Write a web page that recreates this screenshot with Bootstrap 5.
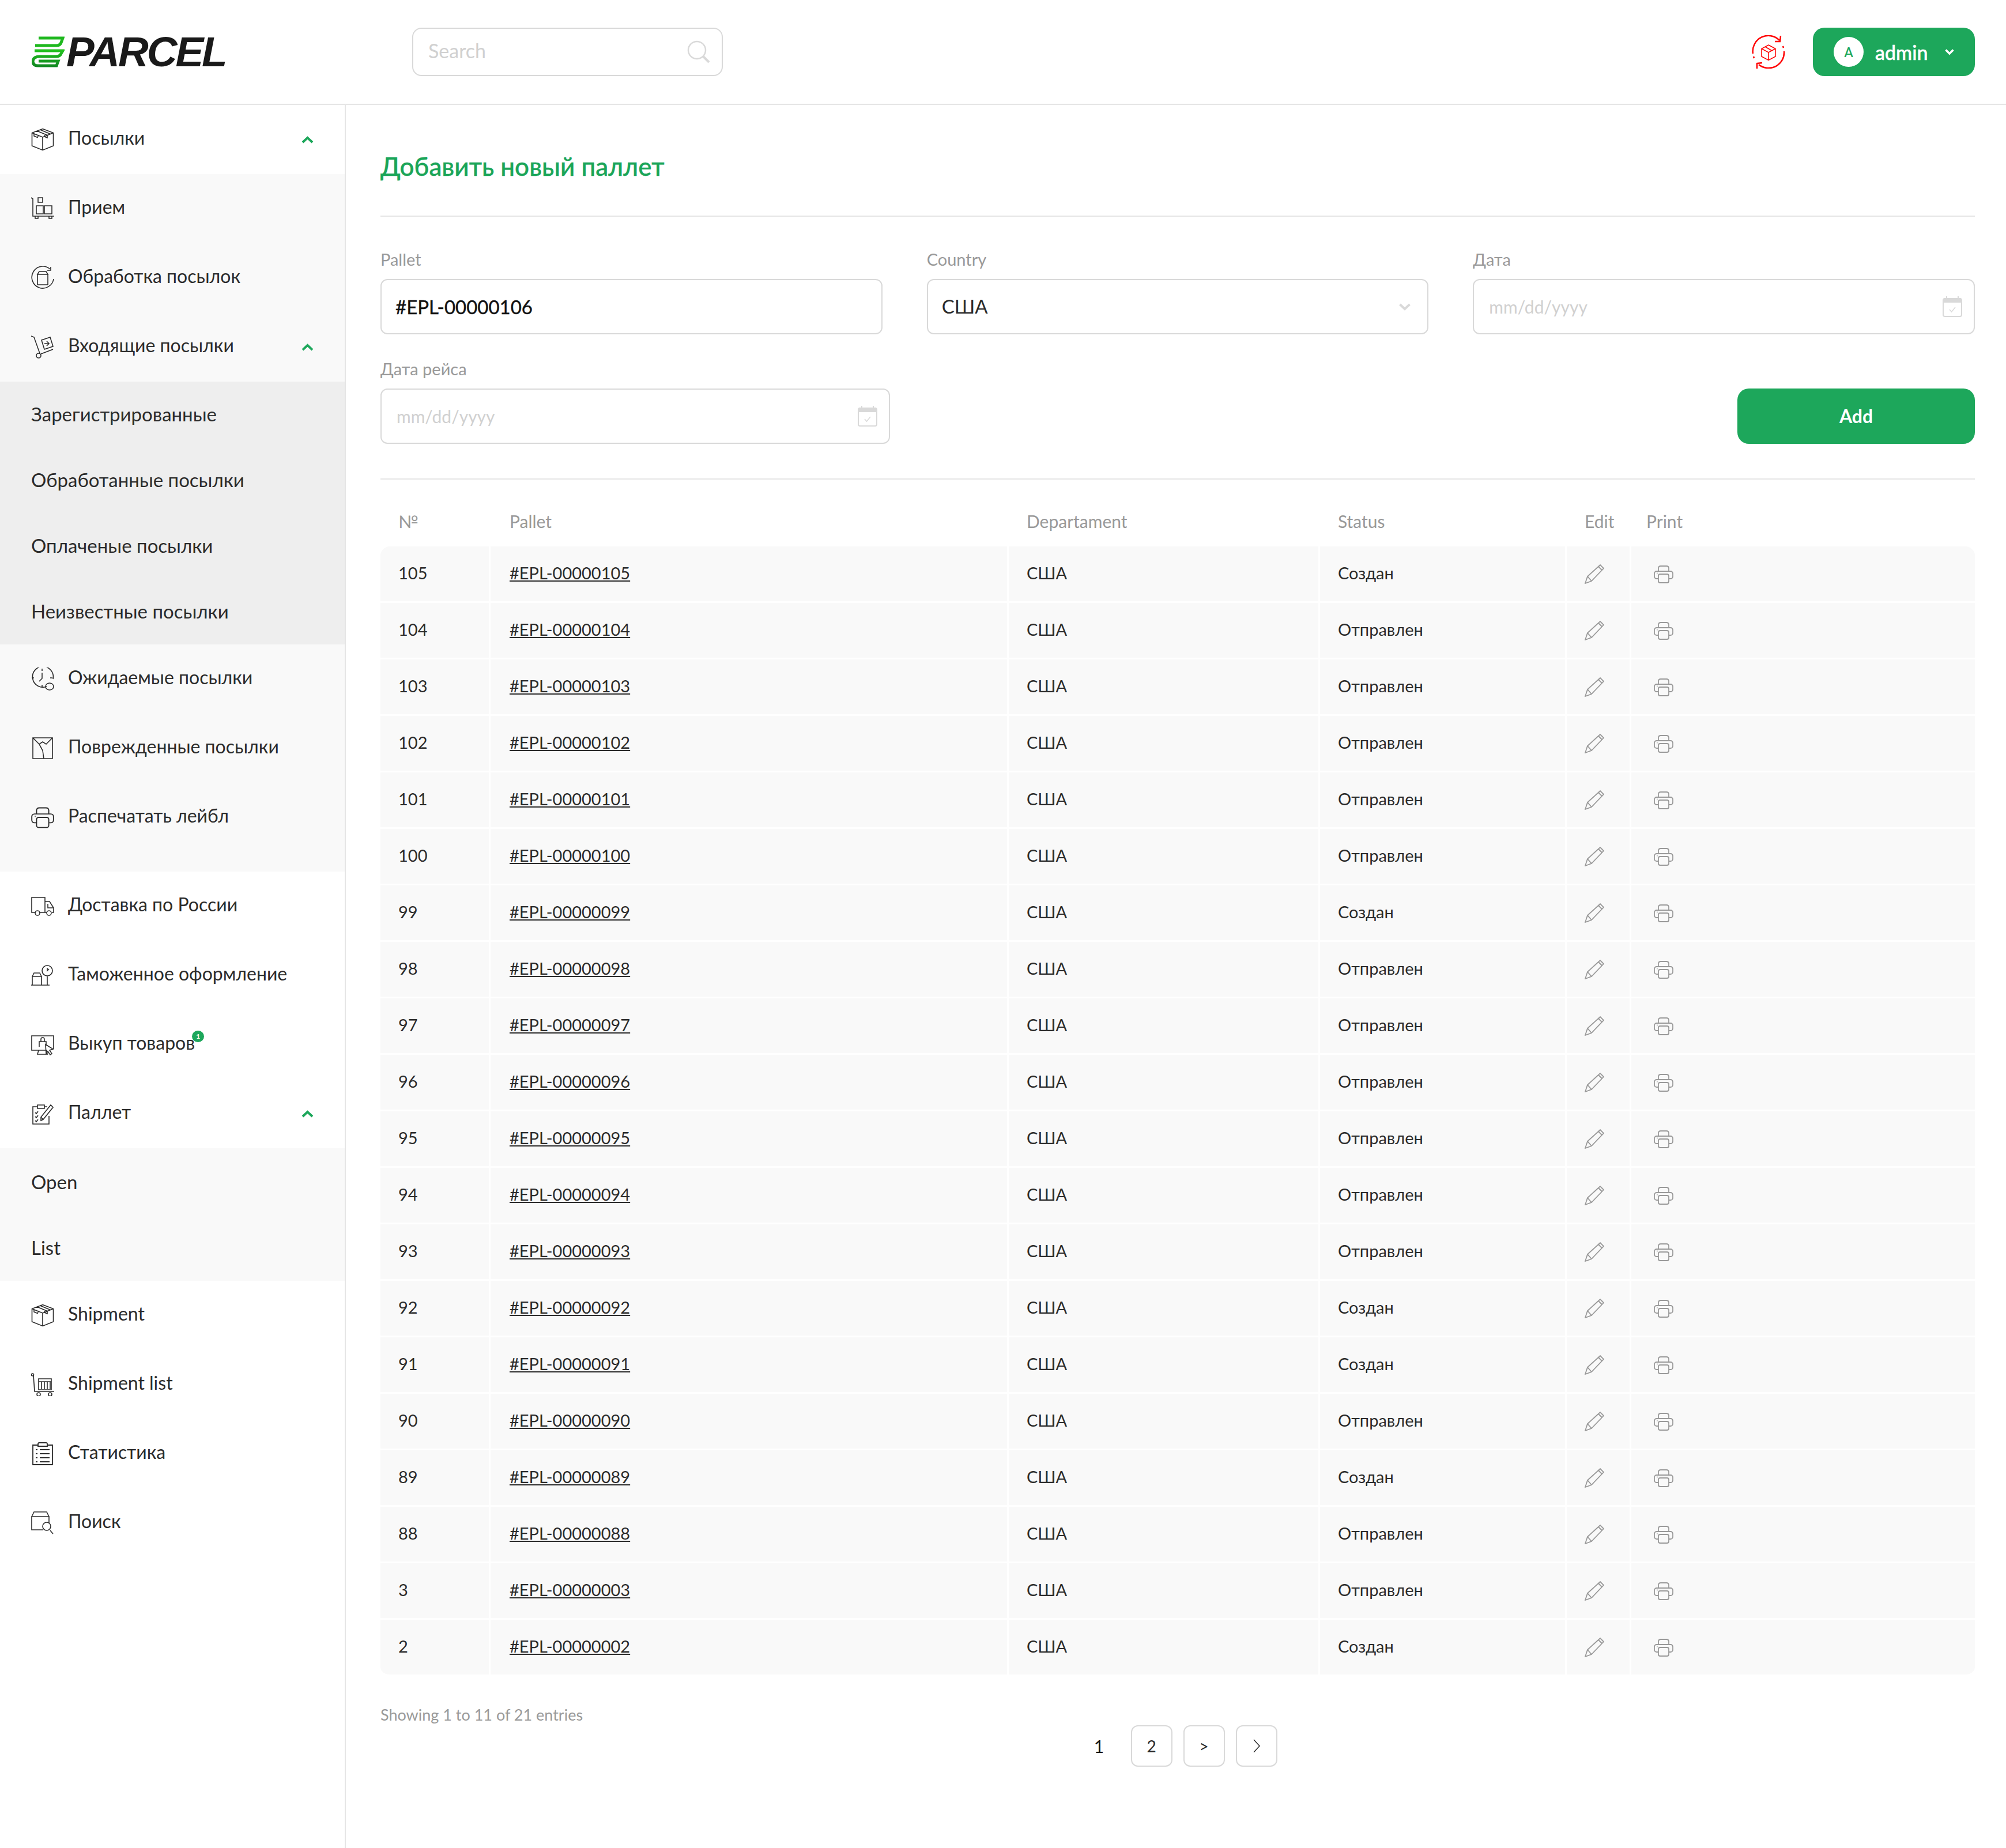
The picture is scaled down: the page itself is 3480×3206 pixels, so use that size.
<!DOCTYPE html>
<html lang="en">
<head>
    <meta charset="UTF-8">
    <meta name="viewport" content="width=device-width, initial-scale=1.0">
    <title>Parcel</title>
    <link href="https://cdn.jsdelivr.net/npm/bootstrap@5.3.0/dist/css/bootstrap.min.css" rel="stylesheet">
    <style>
        body { font-family: "Lato", "Noto Sans", sans-serif; color: #2b2b2b; background: #fff; }
        .top-bar { height: 182px; border-bottom: 2px solid #e5e5e5; padding: 48px 54px 48px 55px; }
        .brand-box { width: 660px; }
        .brand-text { font-family: "Liberation Sans", sans-serif; font-weight: 700; font-style: italic; font-size: 73px; line-height: 56px; letter-spacing: -3px; color: #1a1a1a; margin-left: 3px; }
        .search-box { width: 539px; height: 84px; border: 2px solid #d9d9d9; border-radius: 16px; padding: 0 20px 0 26px; }
        .search-box input { border: 0; outline: 0; font-size: 34px; line-height: 40px; padding: 0 0 4px; width: 100%; color: #2b2b2b; }
        .search-box input::placeholder, .date-box input::placeholder { color: #d0d0d0; }
        .user-btn { width: 281px; height: 84px; background: #1da75b; color: #fff; border: 0; border-radius: 20px; font-size: 34px; font-weight: 500; -webkit-text-stroke: .5px #fff; padding: 0 36px; }
        .user-btn:hover, .user-btn:active, .user-btn.show { background: #1da75b !important; color: #fff !important; }
        .user-btn::after { display: none; }
        .user-avatar { width: 52px; height: 52px; border-radius: 50%; background: #fff; color: #1da75b; font-size: 22px; font-weight: 600; -webkit-text-stroke: 0; }
        .body-wrap { min-height: calc(100vh - 182px); }
        .side-menu { width: 600px; flex: 0 0 600px; border-right: 2px solid #e5e5e5; }
        .side-item { height: 120px; padding: 0 54px 6px 54px; color: #2b2b2b; font-size: 32px; text-decoration: none; }
        .side-ico { width: 40px; height: 40px; margin: 6px 24px 0 0; flex: 0 0 40px; fill: none; stroke: #2b2b2b; stroke-width: 1.6; }
        .side-chev { width: 21px; height: 13px; margin: 6px 0 0 auto; fill: none; stroke: #1da75b; stroke-width: 4; }
        .side-group { background: #f9f9f9; }
        .side-sub { background: #eeeeee; }
        .side-sub-plain { background: #f9f9f9; padding-top: 2px; }
        .sub-item { height: 114px; padding-left: 54px; color: #2b2b2b; font-size: 33px; text-decoration: none; }
        .pad-bottom { padding-bottom: 34px; }
        .side-link { color: inherit; text-decoration: none; }
        .count-pill { position: absolute; top: 3px; right: -16px; width: 21px; height: 20px; padding: 0; background: #1da75b; font-size: 12px; line-height: 20px; font-weight: 700; }
        .main-area { padding: 0 54px 0 60px; min-width: 0; }
        .page-title { font-size: 44px; line-height: 50px; color: #1aa558; font-weight: 500; -webkit-text-stroke: .4px #1aa558; margin: 81px 0 61px; }
        .line-sep { height: 2px; background: #e5e5e5; }
        .form-rows { --bs-gutter-x: 77px; margin-top: 57px; }
        .field-label { font-size: 29px; line-height: 34px; color: #999; margin-bottom: 17px; }
        .main-area .form-control, .main-area .form-select { height: 96px; border: 2px solid #d9d9d9; border-radius: 12px; font-size: 33px; padding: 0 24px; color: #111; box-shadow: none; }
        .main-area .form-control { -webkit-text-stroke: .4px #111; }
        .main-area .form-select { color: #2b2b2b; background-size: 20px 13px; background-position: right 29px center; background-image: url("data:image/svg+xml,%3csvg xmlns='http://www.w3.org/2000/svg' viewBox='0 0 20 13'%3e%3cpath fill='none' stroke='%23d9d9d9' stroke-width='4' d='M1.500 2 10 10 18.500 2'/%3e%3c/svg%3e"); }
        .date-box { height: 96px; border: 2px solid #d9d9d9; border-radius: 12px; padding: 0 20px 0 24px; }
        .date-box input { border: 0; outline: 0; width: 100%; font-size: 30px; }
        .date-wide { width: 884px; }
        .cal-ico { width: 34px; height: 36px; flex: 0 0 34px; }
        .add-btn { width: 412px; height: 96px; background: #1da75b; border: 0; border-radius: 20px; color: #fff; font-size: 32px; font-weight: 700; }
        .second-row { margin-top: 43px; margin-bottom: 60px; }
        .pallet-table { table-layout: fixed; border-collapse: separate; border-spacing: 0; margin: 0; }
        .pallet-table th { font-size: 30px; font-weight: 400; color: #999; padding: 0 0 21px 31px; height: 116px; vertical-align: bottom; border: 0; }
        .pallet-table td { height: 98px; padding: 0 0 3px 31px; font-size: 29px; color: #2b2b2b; background: #f9f9f9; border: 0; border-right: 3px solid #fff; border-bottom: 3px solid #fff; vertical-align: middle; }
        .pallet-table td:last-child { border-right: 0; }
        .pallet-table tr:first-child td:first-child { border-top-left-radius: 16px; }
        .pallet-table tr:first-child td:last-child { border-top-right-radius: 16px; }
        .pallet-table tr:last-child td:first-child { border-bottom-left-radius: 16px; }
        .pallet-table tr:last-child td:last-child { border-bottom-right-radius: 16px; }
        .pallet-table a { color: #2b2b2b; }
        .pallet-table .print-col { padding-left: 26px; }
        .pallet-table .code-col { padding-left: 33px; }
        .th-num { width: 191px; }
        .th-code { width: 899px; }
        .th-dep { width: 540px; }
        .th-status { width: 428px; }
        .th-edit { width: 112px; }
        .tbl-ico { width: 34px; height: 34px; margin-top: 4px; fill: none; stroke: #999; stroke-width: 1.8; display: block; }
        .print-ico { margin-left: 13px; }
        .table-info { font-size: 27px; line-height: 34px; color: #999; margin-top: 50px; }
        .pager { gap: 20px; margin-top: 1px; }
        .pager .page-link { width: 72px; height: 72px; display: flex; align-items: center; justify-content: center; padding: 0; border: 2px solid #d9d9d9 !important; border-radius: 12px !important; font-size: 28px; color: #2b2b2b; background: #fff; }
        .pager .page-item.active .page-link { border-color: transparent !important; color: #111; background: #fff; font-size: 30px; }
    </style>
</head>
<body>

<!-- icons used more than once -->
<svg width="0" height="0" class="d-none">
    <symbol id="i-box" viewBox="0 0 40 40">
        <path d="M20 1.500 38.500 8.500V31L20 38.500 1.500 31V8.500ZM1.500 8.500 20 16 38.500 8.500M20 16V38.500M10 5 28 12.500V17L23 15V12.500M15.500 3 33.500 10.500M5 10V14L11 16.500 13 12" />
    </symbol>
    <symbol id="i-print" viewBox="0 0 34 34">
        <path d="M8 12V6.500A4 4 0 0 1 12 3H22A4 4 0 0 1 26 6.500V12M8 25H5A4 4 0 0 1 1 21V16A4 4 0 0 1 5 12H29A4 4 0 0 1 33 16V21A4 4 0 0 1 29 25H26M11 17H23A3 3 0 0 1 26 20V29A3 3 0 0 1 23 32H11A3 3 0 0 1 8 29V20A3 3 0 0 1 11 17ZM5.500 15.500H6.500" />
    </symbol>
    <symbol id="i-pen" viewBox="0 0 34 34">
        <path d="M1 33 5 21 27 1 33 7 12 29ZM5 21 12 29M24 4 30 10" />
    </symbol>
    <symbol id="i-cal" viewBox="0 0 34 36">
        <rect x="1" y="4" width="32" height="31" rx="3" fill="#fff" stroke="#d9d9d9" stroke-width="2"/>
        <path d="M1 5A3 3 0 0 1 4 3H30A3 3 0 0 1 33 5V11H1Z" fill="#d9d9d9"/>
        <path d="M7 0V4M27 0V4" stroke="#d9d9d9" stroke-width="2"/>
        <path d="M12 23 15.500 27 22 19" fill="none" stroke="#d9d9d9" stroke-width="1.500"/>
    </symbol>
    <symbol id="i-up" viewBox="0 0 21 13">
        <path d="M2 11 10.500 3 19 11" />
    </symbol>
</svg>

<header class="top-bar d-flex align-items-center">
    <div class="brand-box d-flex align-items-center">
        <svg width="57" height="54" viewBox="0 0 57 54" fill="none" stroke-width="5">
            <defs>
                <linearGradient id="logoGreen" x1="0" y1="0" x2="0" y2="1">
                    <stop offset="0" stop-color="#22c01e"/>
                    <stop offset="1" stop-color="#128a22"/>
                </linearGradient>
            </defs>
            <path d="M12 3H54L51 11Q49 16 43 16H6" stroke="#1fb81f"/>
            <path d="M5 25H54L51 30Q49 35 42 35H14Q3 35 2 43Q2 51 11 51H43L46 43H12" stroke="url(#logoGreen)"/>
        </svg>
        <span class="brand-text">PARCEL</span>
    </div>
    <div class="search-box d-flex align-items-center">
        <input type="text" placeholder="Search">
        <svg width="40" height="40" viewBox="0 0 40 40" fill="none" stroke="#d9d9d9" stroke-width="2.500" class="flex-shrink-0">
            <circle cx="17" cy="17" r="15"/>
            <path d="M28 28 38 38" stroke-width="4"/>
        </svg>
    </div>
    <div class="ms-auto d-flex align-items-center">
        <svg width="58" height="58" viewBox="0 0 58 58" fill="none" stroke="#f00" stroke-width="2.500">
            <path d="M2 32A27 27 0 0 1 48 9M50 1 49 11 40 11M54 19 55 22M56 28A27 27 0 0 1 12 51M9 58 9 49 18 48M4 40 3 37"/>
            <path d="M29 17 41 23.500V37L29 43.500 17 37V23.500ZM17 23.500 29 30 41 23.500M29 30V43.500M23 20 35 27" stroke-width="1.500"/>
        </svg>
        <div class="dropdown ms-5">
            <button class="btn user-btn dropdown-toggle d-flex align-items-center" type="button" data-bs-toggle="dropdown">
                <span class="user-avatar d-flex align-items-center justify-content-center">A</span>
                <span class="ms-3 ps-1">admin</span>
                <svg class="ms-auto" width="16" height="12" viewBox="0 0 16 12" fill="none" stroke="#fff" stroke-width="3.500"><path d="M1.500 2.500 8 9 14.500 2.500"/></svg>
            </button>
            <ul class="dropdown-menu">
                <li><a class="dropdown-item" href="#">Logout</a></li>
            </ul>
        </div>
    </div>
</header>

<div class="d-flex body-wrap">
    <nav class="side-menu">
        <a class="side-item d-flex align-items-center" href="#">
            <svg class="side-ico"><use href="#i-box"/></svg>Посылки
            <svg class="side-chev"><use href="#i-up"/></svg>
        </a>
        <div class="side-group pad-bottom">
            <a class="side-item d-flex align-items-center" href="#">
                <svg class="side-ico" viewBox="0 0 40 40"><path d="M0 1 3 3V33H40M7 33V37H12V33M31 33V37H36V33M9 15H21V29H9ZM23 15H36V29H23ZM12 1H20V9H12Z"/></svg>Прием
            </a>
            <a class="side-item d-flex align-items-center" href="#">
                <svg class="side-ico" viewBox="0 0 40 40"><path d="M39 22A19 19 0 1 1 33 5M34 1V7H28M11 14H29V32H11ZM14 9H26L29 14H11Z"/></svg>Обработка посылок
            </a>
            <a class="side-item d-flex align-items-center" href="#">
                <svg class="side-ico" viewBox="0 0 40 40"><path d="M0 1 5 3 15 31M17 32 38 24M18 8 33 3 38 19 23 24ZM23 14H31M27 10 31 14 27 18"/><circle cx="13" cy="35" r="4"/></svg>Входящие посылки
                <svg class="side-chev"><use href="#i-up"/></svg>
            </a>
            <div class="side-sub">
                <a class="sub-item d-flex align-items-center" href="#">Зарегистрированные</a>
                <a class="sub-item d-flex align-items-center" href="#">Обработанные посылки</a>
                <a class="sub-item d-flex align-items-center" href="#">Оплаченые посылки</a>
                <a class="sub-item d-flex align-items-center" href="#">Неизвестные посылки</a>
            </div>
            <a class="side-item d-flex align-items-center" href="#">
                <svg class="side-ico" viewBox="0 0 40 40"><path d="M27 33A18 18 0 1 1 38 20M19 2V6M19 30V34M1 18H5M33 18H37M19 9V19L14 24"/><ellipse cx="32" cy="33" rx="7" ry="6"/></svg>Ожидаемые посылки
            </a>
            <a class="side-item d-flex align-items-center" href="#">
                <svg class="side-ico" viewBox="0 0 40 40"><path d="M3 2H37V38H3ZM3 2 14 13 20 9 26 13 37 2M14 13 20 24 22 38"/></svg>Поврежденные посылки
            </a>
            <a class="side-item d-flex align-items-center" href="#">
                <svg class="side-ico" viewBox="0 0 34 34" stroke-width="2"><use href="#i-print"/></svg>Распечатать лейбл
            </a>
        </div>
        <a class="side-item d-flex align-items-center" href="#">
            <svg class="side-ico" viewBox="0 0 40 40"><path d="M8 31H1V5H24V31H14M24 31H27M24 12H32L39 23V31H36M29 16V23H38"/><circle cx="11" cy="32" r="4"/><circle cx="31" cy="32" r="4"/></svg>Доставка по России
        </a>
        <a class="side-item d-flex align-items-center" href="#">
            <svg class="side-ico" viewBox="0 0 40 40"><path d="M0 37H32M2 37V22H18V37M2 22 5 16H15L18 22M28 37V22"/><circle cx="28" cy="12" r="9"/><path d="M28 7V12L31 9"/></svg>Таможенное оформление
        </a>
        <div class="side-item d-flex align-items-center">
            <svg class="side-ico" viewBox="0 0 40 40"><path d="M39 28V5H1V30H27M13 30 11 37H29M27 30 28 37M14 24V15H26V22M17 15V11A3 3 0 0 1 23 11V15M25 20 38 28 32 30 36 36 33 38 29 32 26 36Z"/></svg>
            <a class="position-relative side-link" href="#">Выкуп товаров<span class="badge rounded-pill count-pill">1</span></a>
        </div>
        <a class="side-item d-flex align-items-center" href="#">
            <svg class="side-ico" viewBox="0 0 40 40"><path d="M31 24V38H3V8H11M23 8H28M11 5H23V11H11ZM7 18 9 20 12 16M7 25 9 27 12 23M7 32 9 34 12 30M17 32 21 30 38 9 34 5 17 26ZM17 26 21 30"/></svg>Паллет
            <svg class="side-chev"><use href="#i-up"/></svg>
        </a>
        <div class="side-sub-plain">
            <a class="sub-item d-flex align-items-center" href="#">Open</a>
            <a class="sub-item d-flex align-items-center" href="#">List</a>
        </div>
        <a class="side-item d-flex align-items-center" href="#">
            <svg class="side-ico"><use href="#i-box"/></svg>Shipment
        </a>
        <a class="side-item d-flex align-items-center" href="#">
            <svg class="side-ico" viewBox="0 0 40 40"><circle cx="2.500" cy="3" r="2"/><path d="M4 4 6 32H40M13 10H35V29H13ZM13 15H35M18 15V28M23 15V28M28 15V28M33 15V28"/><circle cx="13" cy="37" r="3"/><circle cx="33" cy="37" r="3"/></svg>Shipment list
        </a>
        <a class="side-item d-flex align-items-center" href="#">
            <svg class="side-ico" viewBox="0 0 40 40"><path d="M12 5H3V39H37V5H28M12 7V3Q12 1 14 1H26Q28 1 28 3V7ZM15 13H32M15 20H32M15 27H32M15 34H32M8 13H11M8 20H11M8 27H11M8 34H11" stroke-width="1.800"/></svg>Статистика
        </a>
        <a class="side-item d-flex align-items-center" href="#">
            <svg class="side-ico" viewBox="0 0 40 40"><path d="M21 32H1V9H31V20M1 9 5 1H27L31 9M33 33 38 39"/><circle cx="27" cy="26" r="7"/></svg>Поиск
        </a>
    </nav>

    <main class="main-area flex-grow-1">
        <h1 class="page-title">Добавить новый паллет</h1>
        <div class="line-sep"></div>

        <div class="row form-rows">
            <div class="col-4">
                <div class="field-label">Pallet</div>
                <input type="text" class="form-control" value="#EPL-00000106">
            </div>
            <div class="col-4">
                <div class="field-label">Country</div>
                <select class="form-select"><option>США</option></select>
            </div>
            <div class="col-4">
                <div class="field-label">Дата</div>
                <div class="date-box d-flex align-items-center">
                    <input type="text" placeholder="mm/dd/yyyy">
                    <svg class="cal-ico"><use href="#i-cal"/></svg>
                </div>
            </div>
        </div>
        <div class="d-flex justify-content-between align-items-end second-row">
            <div class="date-wide">
                <div class="field-label">Дата рейса</div>
                <div class="date-box d-flex align-items-center">
                    <input type="text" placeholder="mm/dd/yyyy">
                    <svg class="cal-ico"><use href="#i-cal"/></svg>
                </div>
            </div>
            <button class="btn add-btn" type="button">Add</button>
        </div>
        <div class="line-sep"></div>

        <table class="table pallet-table">
            <thead>
            <tr><th class="th-num">№</th><th class="th-code code-col">Pallet</th><th class="th-dep">Departament</th><th class="th-status">Status</th><th class="th-edit">Edit</th><th class="print-col">Print</th></tr>
            </thead>
            <tbody id="palletRows"></tbody>
        </table>

        <div class="table-info">Showing 1 to 11 of 21 entries</div>
        <ul class="pagination pager justify-content-center">
            <li class="page-item active"><a class="page-link" href="#">1</a></li>
            <li class="page-item"><a class="page-link" href="#">2</a></li>
            <li class="page-item"><a class="page-link" href="#">&gt;</a></li>
            <li class="page-item"><a class="page-link" href="#" aria-label="Last"><svg width="14" height="24" viewBox="0 0 14 24" fill="none" stroke="#2b2b2b" stroke-width="1.500"><path d="M2 1 12 12 2 23"/></svg></a></li>
        </ul>
    </main>
</div>

<script src="https://cdn.jsdelivr.net/npm/bootstrap@5.3.0/dist/js/bootstrap.bundle.min.js"></script>
<script>
    // second value: 1 = Создан, 0 = Отправлен
    const pallets = [[105,1],[104,0],[103,0],[102,0],[101,0],[100,0],[99,1],[98,0],[97,0],[96,0],[95,0],[94,0],[93,0],[92,1],[91,1],[90,0],[89,1],[88,0],[3,0],[2,1]];
    let rows = '';
    for (const [num, created] of pallets) {
        const code = '#EPL-' + String(num).padStart(8, '0');
        rows += `<tr><td>${num}</td><td class="code-col"><a href="#">${code}</a></td><td>США</td><td>${created ? 'Создан' : 'Отправлен'}</td>
            <td><svg class="tbl-ico"><use href="#i-pen"/></svg></td>
            <td class="print-col"><svg class="tbl-ico print-ico"><use href="#i-print"/></svg></td></tr>`;
    }
    document.getElementById('palletRows').innerHTML = rows;
</script>
</body>
</html>
